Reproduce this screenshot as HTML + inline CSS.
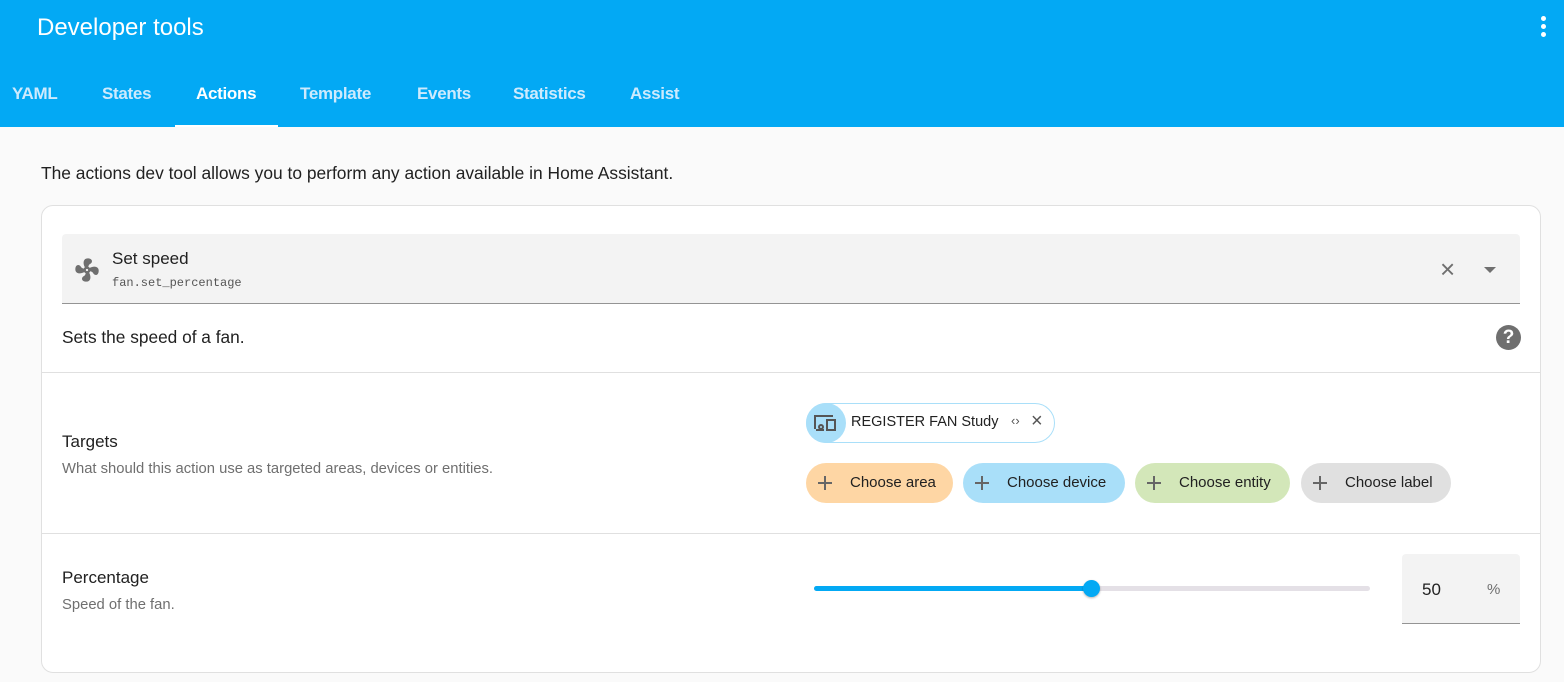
<!DOCTYPE html>
<html><head><style>
*{margin:0;padding:0;box-sizing:border-box}
body{width:1564px;height:682px;overflow:hidden;background:#fafafa;font-family:"Liberation Sans",sans-serif;color:#212121;position:relative}
.a{position:absolute}
.hdr{left:0;top:0;width:1564px;height:127px;background:#03a9f4}
.tab{top:84px;font-size:17px;font-weight:bold;color:#cdeafd;letter-spacing:-0.3px}
.card{left:41px;top:205px;width:1500px;height:468px;background:#fff;border:1px solid #e0e0e0;border-radius:12px}
.chip{height:40px;top:463px;border-radius:20px;font-size:15px;color:#212121;line-height:40px;padding-left:44px}
.chip:before{content:"";position:absolute;left:12px;top:19px;width:14px;height:2px;background:#666}
.chip:after{content:"";position:absolute;left:18px;top:13px;width:2px;height:14px;background:#666}
</style></head><body>
<div class="a hdr"></div>
<div class="a" style="left:37px;top:14px;font-size:24px;color:#fff">Developer tools</div>
<div class="a" style="left:1541px;top:16px;width:5px">
<div style="width:5px;height:5px;border-radius:50%;background:#fff;margin-bottom:3px"></div>
<div style="width:5px;height:5px;border-radius:50%;background:#fff;margin-bottom:3px"></div>
<div style="width:5px;height:5px;border-radius:50%;background:#fff"></div></div>
<div class="a tab" style="left:12px">YAML</div>
<div class="a tab" style="left:102px">States</div>
<div class="a tab" style="left:196px;color:#fff">Actions</div>
<div class="a tab" style="left:300px">Template</div>
<div class="a tab" style="left:417px">Events</div>
<div class="a tab" style="left:513px">Statistics</div>
<div class="a tab" style="left:630px">Assist</div>
<div class="a" style="left:175px;top:125px;width:103px;height:2px;background:#fff"></div>
<div class="a" style="left:41px;top:163px;font-size:17.4px">The actions dev tool allows you to perform any action available in Home Assistant.</div>
<div class="a card"></div>
<div class="a" style="left:62px;top:234px;width:1458px;height:70px;background:#f3f3f3;border-bottom:1px solid #949494;border-radius:4px 4px 0 0"></div>
<svg class="a" style="left:73px;top:256px" width="28" height="28" viewBox="0 0 24 24"><path fill="#6f6f6f" d="M12,11A1,1 0 0,0 11,12A1,1 0 0,0 12,13A1,1 0 0,0 13,12A1,1 0 0,0 12,11M12.5,2C17,2 17.11,5.57 14.75,6.75C13.760,7.24 13.32,8.29 13.13,9.22C13.61,9.42 14.03,9.73 14.35,10.13C18.05,8.13 22.030,8.92 22.03,12.5C22.03,17 18.46,17.1 17.28,14.73C16.78,13.74 15.72,13.3 14.79,13.11C14.59,13.59 14.28,14 13.88,14.34C15.87,18.03 15.08,22 11.5,22C7,22 6.91,18.42 9.27,17.24C10.25,16.75 10.69,15.71 10.89,14.79C10.4,14.59 9.97,14.27 9.65,13.87C5.96,15.85 2,15.07 2,11.5C2,7 5.56,6.89 6.74,9.26C7.24,10.25 8.29,10.68 9.22,10.87C9.41,10.39 9.73,9.97 10.14,9.65C8.15,5.96 8.94,2 12.5,2Z"/></svg>
<div class="a" style="left:112px;top:249px;font-size:17px">Set speed</div>
<div class="a" style="left:112px;top:276px;font-size:12px;font-family:'Liberation Mono',monospace;color:#555">fan.set_percentage</div>
<div class="a" style="left:1440px;top:254px;font-size:26px;color:#6f6f6f;line-height:30px">×</div>
<div class="a" style="left:1484px;top:267px;width:0;height:0;border-left:6px solid transparent;border-right:6px solid transparent;border-top:6px solid #6f6f6f"></div>
<div class="a" style="left:62px;top:327px;font-size:17.3px">Sets the speed of a fan.</div>
<div class="a" style="left:1496px;top:325px;width:25px;height:25px;border-radius:50%;background:#6f6f6f;color:#fff;font-weight:bold;font-size:19px;text-align:center;line-height:25px">?</div>
<div class="a" style="left:42px;top:372px;width:1498px;height:1px;background:#e0e0e0"></div>
<div class="a" style="left:62px;top:432px;font-size:17px">Targets</div>
<div class="a" style="left:62px;top:461px;font-size:14.8px;color:#6f6f6f">What should this action use as targeted areas, devices or entities.</div>
<div class="a" style="left:806px;top:403px;width:249px;height:40px;border:1px solid #a9dff9;border-radius:20px"></div>
<div class="a" style="left:806px;top:403px;width:40px;height:40px;border-radius:50%;background:#a9dff9"></div>
<svg class="a" style="left:813px;top:411px" width="26" height="24" viewBox="0 0 26 24"><path fill="none" stroke="#555" stroke-width="2" d="M2 18V5h18M3 19h8M14 9h8v10h-8z"/><circle cx="8" cy="16" r="2" fill="none" stroke="#555" stroke-width="2"/></svg>
<div class="a" style="left:851px;top:414px;font-size:14.5px">REGISTER FAN Study</div>
<div class="a" style="left:1011px;top:413px;font-size:13px;color:#555">‹›</div>
<div class="a" style="left:1031px;top:410px;font-size:20px;color:#555">×</div>
<div class="a chip" style="left:806px;width:147px;background:#fed6a4">Choose area</div>
<div class="a chip" style="left:963px;width:162px;background:#a9dff9">Choose device</div>
<div class="a chip" style="left:1135px;width:155px;background:#d3e7b9">Choose entity</div>
<div class="a chip" style="left:1301px;width:150px;background:#e0e0e0">Choose label</div>
<div class="a" style="left:42px;top:533px;width:1498px;height:1px;background:#e0e0e0"></div>
<div class="a" style="left:62px;top:568px;font-size:17px">Percentage</div>
<div class="a" style="left:62px;top:597px;font-size:14.8px;color:#6f6f6f">Speed of the fan.</div>
<div class="a" style="left:814px;top:586px;width:556px;height:5px;border-radius:3px;background:#e4e0e6"></div>
<div class="a" style="left:814px;top:586px;width:278px;height:5px;border-radius:3px;background:#03a9f4"></div>
<div class="a" style="left:1083px;top:580px;width:17px;height:17px;border-radius:50%;background:#03a9f4;box-shadow:0 1px 2px rgba(0,0,0,.3)"></div>
<div class="a" style="left:1402px;top:554px;width:118px;height:70px;background:#f3f3f3;border-bottom:1px solid #949494;border-radius:4px 4px 0 0"></div>
<div class="a" style="left:1422px;top:580px;font-size:17px">50</div>
<div class="a" style="left:1487px;top:581px;font-size:15px;color:#6f6f6f">%</div>
</body></html>
